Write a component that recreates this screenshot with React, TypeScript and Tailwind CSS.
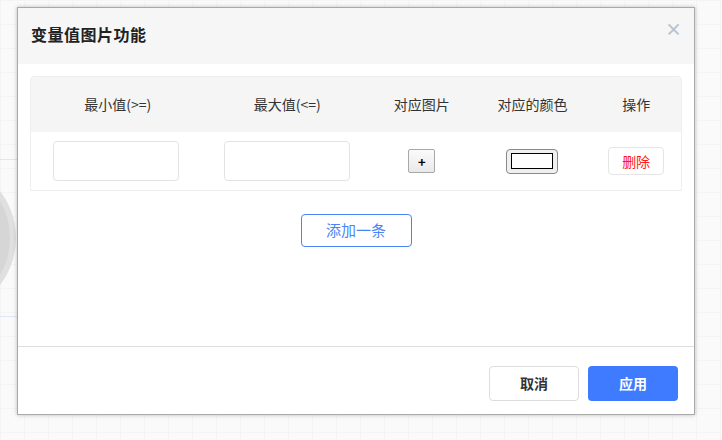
import React from "react";

const font = { fontFamily: '"Noto Sans CJK SC", "Noto Sans", sans-serif' };

export default function App() {
  const cols = ["最小值(>=)", "最大值(<=)", "对应图片", "对应的颜色", "操作"];
  const widths = ["w-[174px]", "w-[166px]", "w-[104px]", "w-[118px]", "w-[90px]"];
  return (
    <div
      className="relative w-[722px] h-[440px] overflow-hidden bg-[#fafafa] bg-[linear-gradient(to_right,#f4f4f4_1px,transparent_1px),linear-gradient(to_bottom,#f4f4f4_1px,transparent_1px)] bg-[size:24px_24px]"
      style={font}
    >
      {/* background canvas element partially visible */}
      <div className="absolute left-0 top-[159px] w-[20px] h-px bg-[#dfe6f7]" />
      <div className="absolute left-0 top-[316px] w-[20px] h-px bg-[#dfe6f7]" />
      <div className="absolute left-[-140px] top-[160px] w-[156px] h-[156px] rounded-full bg-[#d6d6d6] border-[6px] border-[#e0e0e0]" />

      {/* dialog */}
      <div className="absolute left-[17px] top-[7px] w-[678px] h-[408px] bg-white border border-[#a9a9a9] shadow-[0_0_4px_rgba(0,0,0,0.25)] flex flex-col">
        <div className="h-[56px] shrink-0 bg-[#f6f6f6] flex items-center justify-between pl-[13px] pr-[12px]">
          <span className="text-[16px] font-bold text-[#222] tracking-[0.5px] -mt-[4px]">变量值图片功能</span>
          <span className="text-[17px] leading-none text-[#b7c2d2] font-bold -mt-[16px]">×</span>
        </div>
        <div className="flex-1 px-[12px] pt-[12px] flex flex-col">
          <div className="border border-[#eeeeee] rounded-tr-[4px] rounded-tl-[4px]">
            <div className="flex h-[55px] bg-[#f5f5f5] items-center text-[14px] text-[#333]">
              {cols.map((c, i) => (
                <div key={c} className={`${widths[i]} text-center`}>
                  {c}
                </div>
              ))}
            </div>
            <div className="flex h-[58px] items-center bg-white">
              <div className="w-[174px] flex pl-[22px]">
                <div className="w-[126px] h-[40px] border border-[#e3e3e3] rounded-[4px]" />
              </div>
              <div className="w-[166px] flex pl-[19px]">
                <div className="w-[126px] h-[40px] border border-[#e3e3e3] rounded-[4px]" />
              </div>
              <div className="w-[104px] flex justify-center">
                <div className="w-[27px] h-[24px] border border-[#a8a8a8] rounded-[2px] bg-gradient-to-b from-[#fbfbfb] to-[#e9e9e9] flex items-center justify-center text-[13px] text-black font-bold leading-none">
                  +
                </div>
              </div>
              <div className="w-[118px] flex justify-center">
                <div className="w-[52px] h-[25px] border border-[#8a8a8a] rounded-[4px] bg-[#f0f0f0] flex items-center justify-center">
                  <div className="w-[42px] h-[16px] border border-black bg-white" />
                </div>
              </div>
              <div className="w-[90px] flex justify-center">
                <div className="w-[56px] h-[28px] border border-[#e5e5e5] rounded-[4px] flex items-center justify-center text-[14px] text-[#ff1a1a]">
                  删除
                </div>
              </div>
            </div>
          </div>
          <div className="flex justify-center mt-[23px]">
            <div className="w-[111px] h-[33px] border border-[#4a84f7] rounded-[4px] flex items-center justify-center text-[15px] text-[#4a84f7]">
              添加一条
            </div>
          </div>
        </div>
        <div className="h-[68px] shrink-0 border-t border-[#dddddd] flex justify-end items-start pt-[19px] pr-[16px] gap-[9px]">
          <div className="w-[90px] h-[35px] border border-[#dddddd] rounded-[4px] flex items-center justify-center text-[14px] font-bold text-[#333]">
            取消
          </div>
          <div className="w-[90px] h-[35px] rounded-[4px] bg-[#3f7bff] flex items-center justify-center text-[14px] font-bold text-white">
            应用
          </div>
        </div>
      </div>
    </div>
  );
}
